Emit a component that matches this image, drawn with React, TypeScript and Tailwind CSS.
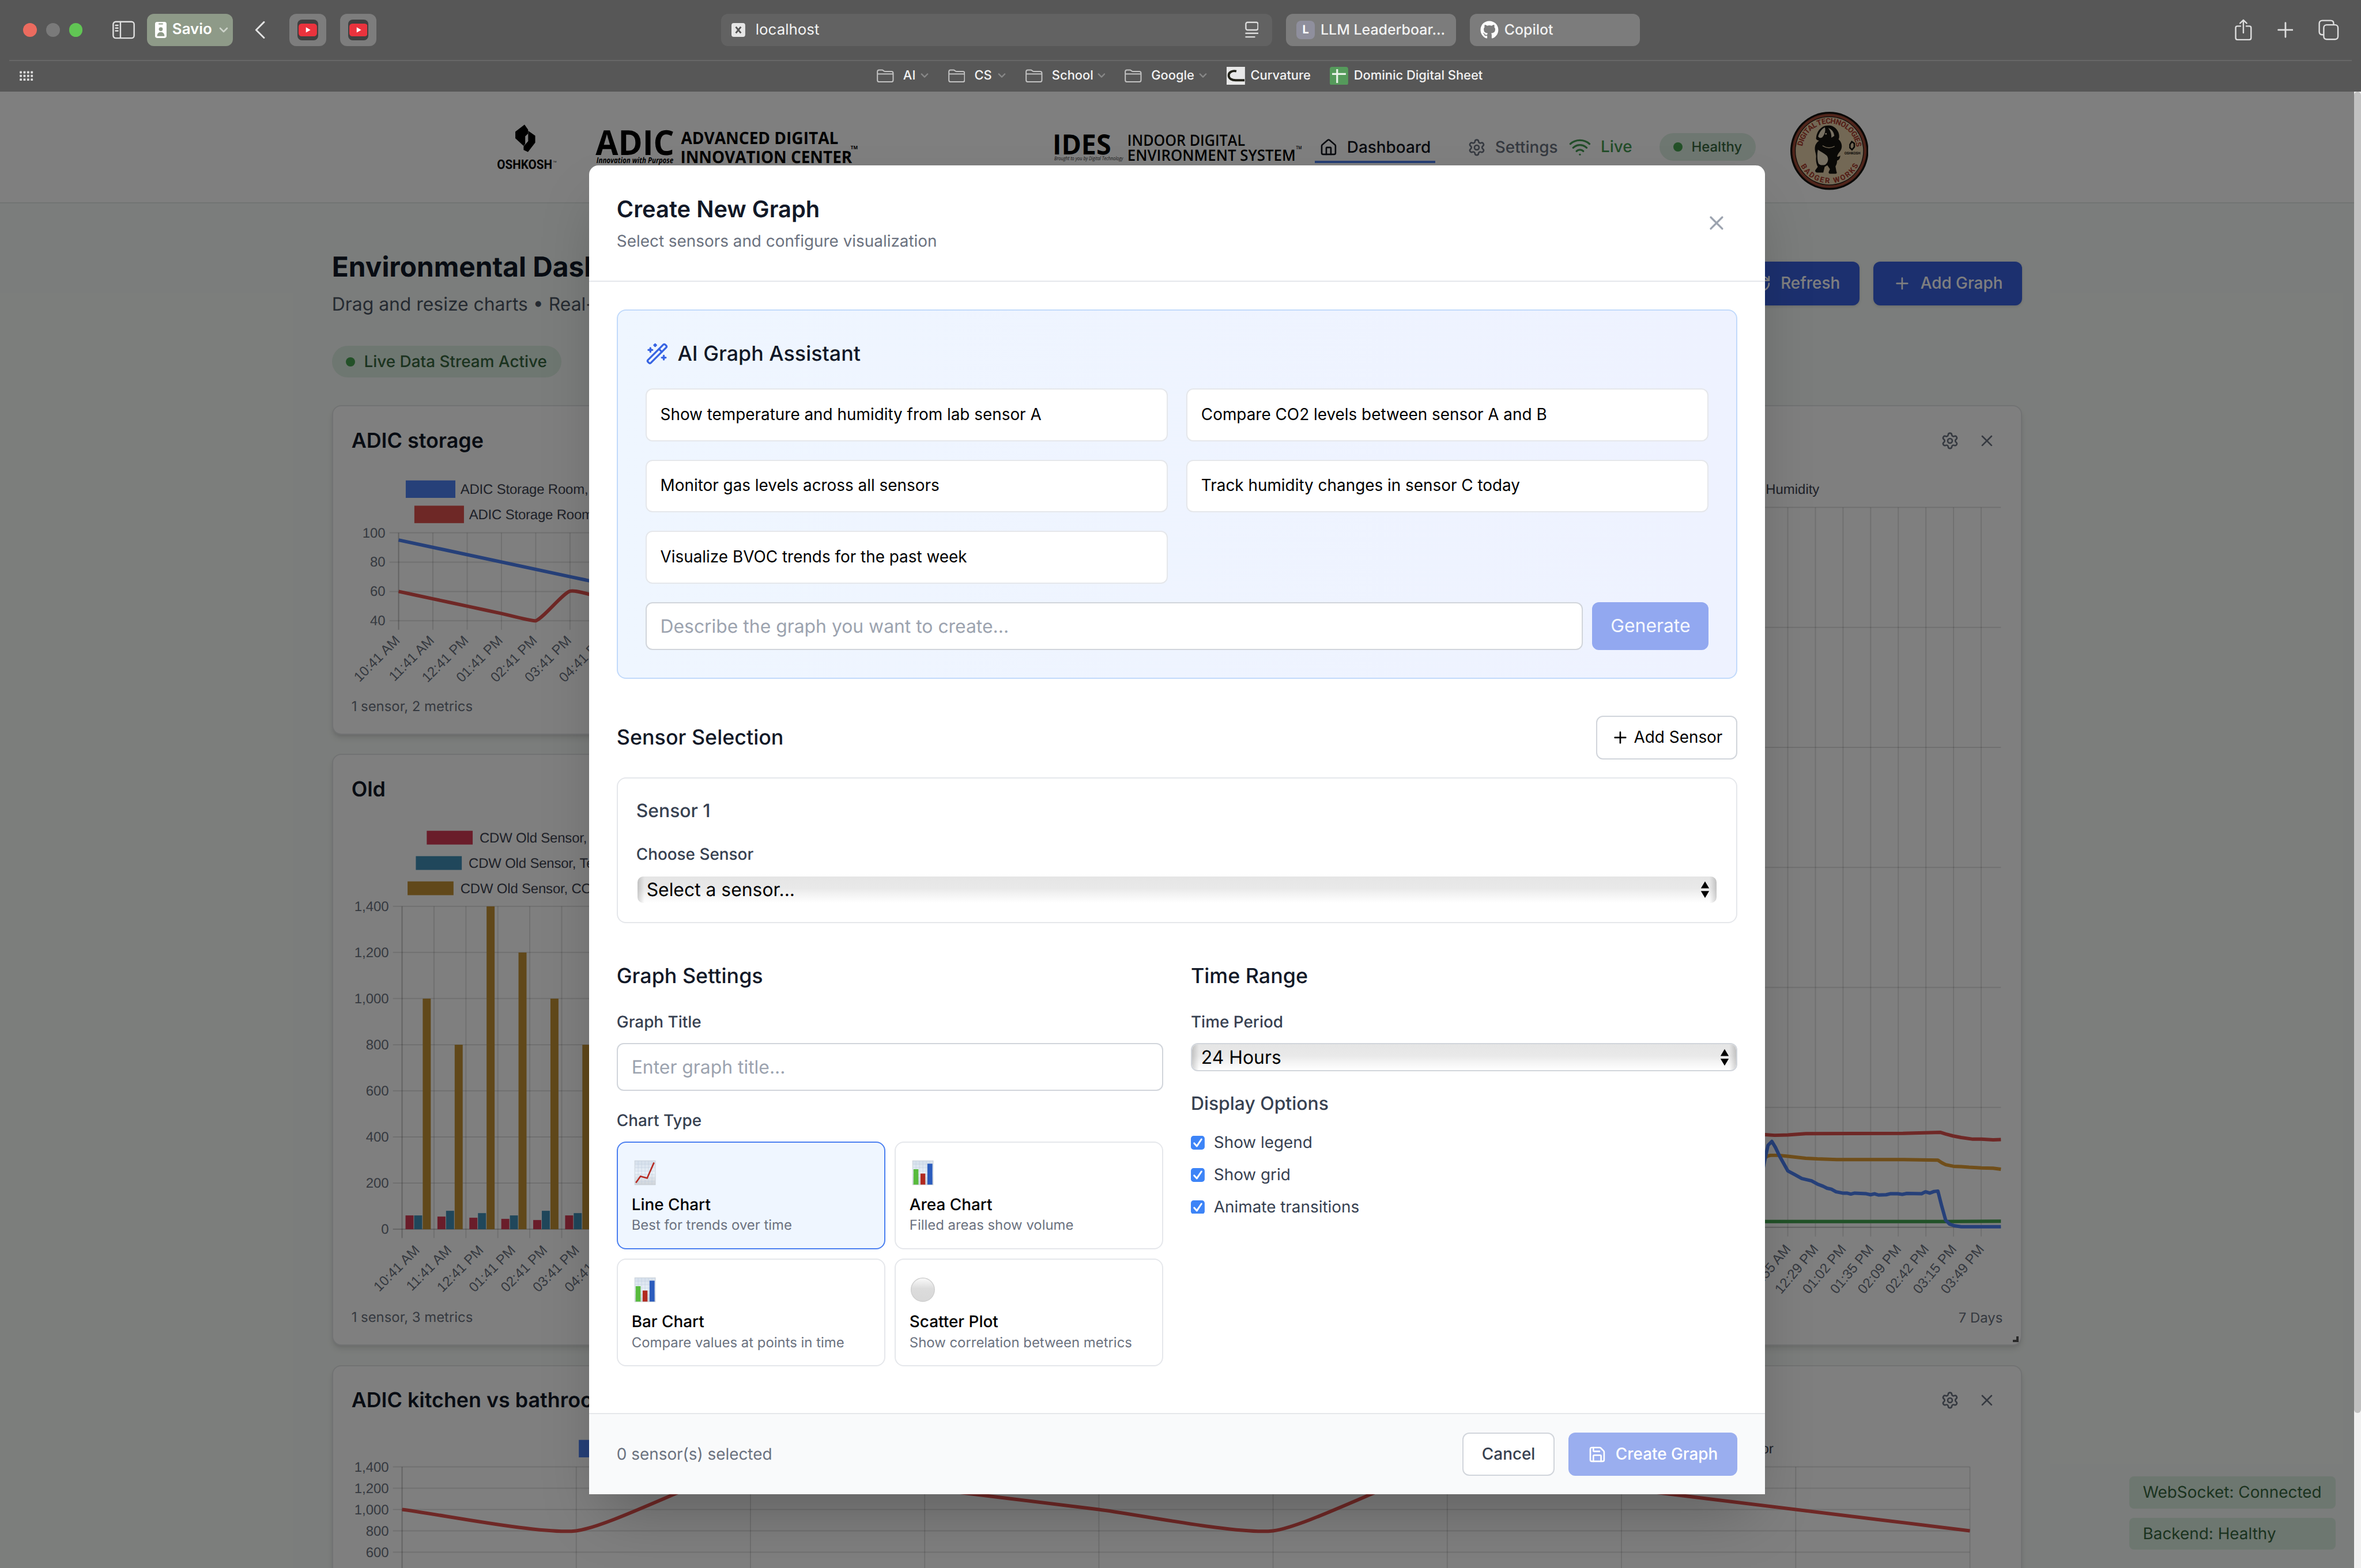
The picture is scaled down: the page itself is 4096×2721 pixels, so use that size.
import type { ReactNode } from "react";
import { House, Plus, RefreshCw, Save, Settings, WandSparkles, Wifi, X } from "lucide-react";
import { FaGithub } from "react-icons/fa";

/* ---------- browser chrome ---------- */

function SmallChevron({ className }: { className: string }) {
  return (
    <svg viewBox="0 0 8 5" className={className} fill="none" stroke="currentColor" strokeWidth="1.3" strokeLinecap="round" strokeLinejoin="round">
      <path d="M1 1l3 3 3-3" />
    </svg>
  );
}

function YouTubeTab() {
  return (
    <div className="flex h-7 w-8 items-center justify-center rounded-md bg-[#7d7d7d]">
      <div className="flex size-[18px] items-center justify-center rounded-[4px] bg-[#404040]">
        <svg viewBox="0 0 16 11" className="h-[11px] w-4">
          <rect width="16" height="11" rx="2.6" fill="#ea333d" />
          <path d="M6.4 3.2v4.6l4-2.3z" fill="#fff" />
        </svg>
      </div>
    </div>
  );
}

function Folder() {
  return (
    <svg viewBox="0 0 15 12" className="h-3 w-[15px] shrink-0" fill="none" stroke="#c3c3c3" strokeWidth="1">
      <path d="M.6 2.3C.6 1.3 1.2.8 2 .8h2.6c.5 0 .8.1 1.1.4l.6.5c.3.2.5.3.9.3h5.6c.9 0 1.5.5 1.5 1.5v6.1c0 1-.6 1.5-1.5 1.5H2C1.100 11.100.6 10.600.6 9.600z" />
      <path d="M.8 4.200h13.400" />
    </svg>
  );
}

function FolderBookmark({ label, width }: { label: string; width: string }) {
  return (
    <div className={`flex items-center ${width}`}>
      <Folder />
      <span className="ml-2">{label}</span>
      <SmallChevron className="mr-[17px] ml-auto h-[5px] w-[7px] text-[#888888]" />
    </div>
  );
}

function BrowserChrome() {
  return (
    <div className="h-20 bg-[#575757] text-[#f2f2f2]">
      <div className="flex h-[52px] items-center">
        <div className="ml-5 flex w-[78px] gap-2">
          <div className="size-3 rounded-full bg-[#ec6b5f]" />
          <div className="size-3 rounded-full bg-[#7a7a7a]" />
          <div className="size-3 rounded-full bg-[#61c554]" />
        </div>
        <svg viewBox="0 0 20 16" className="h-4 w-5" fill="none" stroke="#e0e0e0" strokeWidth="1.2" strokeLinecap="round">
          <rect x=".7" y=".9" width="18.200" height="14.200" rx="2.200" />
          <path d="M7 1v14M2.800 4h2M2.800 6.400h2M2.800 8.800h2" />
        </svg>
        <div className="ml-2.5 flex h-7 w-[75px] items-center rounded-md bg-[#8e9a88] pl-[7px]">
          <svg viewBox="0 0 10 14" className="h-3.5 w-2.5">
            <rect width="10" height="14" rx="1.800" fill="#fff" />
            <rect x="3" y="1.300" width="4" height="1" rx=".5" fill="#8e9a88" />
            <circle cx="5" cy="6.300" r="1.700" fill="#8e9a88" />
            <path d="M1.800 12.400c0-2.300 1.300-3.500 3.200-3.500s3.200 1.200 3.200 3.500z" fill="#8e9a88" />
          </svg>
          <span className="ml-[5px] w-[41px] text-[13px] font-semibold text-white">Savio</span>
          <SmallChevron className="h-[5px] w-2 text-[#cdd3ca]" />
        </div>
        <svg viewBox="0 0 9 16" className="ml-[19px] h-4 w-[9px]" fill="none" stroke="#e3e3e3" strokeWidth="1.500" strokeLinecap="round" strokeLinejoin="round">
          <path d="M8 1.200L1.200 8 8 14.800" />
        </svg>
        <div className="ml-[21px] flex gap-3">
          <YouTubeTab />
          <YouTubeTab />
        </div>
        <div className="ml-[300px] flex h-7 w-[480px] items-center rounded-md bg-[#626262] pr-3 pl-[9px]">
          <svg viewBox="0 0 12 12" className="size-3">
            <rect width="12" height="12" rx="2" fill="#e6e6e6" />
            <path d="M3.800 3.300l4.400 5.400M8.200 3.300L3.800 8.700" stroke="#565656" strokeWidth="1.500" />
          </svg>
          <span className="mt-px ml-[9px] text-[13px]">localhost</span>
          <svg viewBox="0 0 12 15" className="ml-auto h-[15px] w-3" fill="none" stroke="#dcdcdc" strokeWidth="1.200" strokeLinecap="round">
            <rect x=".7" y=".9" width="10.600" height="6.600" rx="1.500" />
            <path d="M.7 10.400h10.600M.7 13.600h7.600" />
          </svg>
        </div>
        <div className="ml-3 flex h-7 w-[148px] items-center rounded-md bg-[#7c7c7c] pl-[9px]">
          <div className="flex size-4 items-center justify-center rounded-[4px] bg-[#8f8f9d] text-[10px] font-bold text-white">L</div>
          <span className="mt-px ml-[5px] text-[12.500px] font-medium whitespace-nowrap">LLM Leaderboar...</span>
        </div>
        <div className="ml-3 flex h-7 w-[148px] items-center rounded-md bg-[#7c7c7c] pl-[9px]">
          <FaGithub className="size-4 text-white" />
          <span className="mt-px ml-[5px] text-[12.500px] font-medium">Copilot</span>
        </div>
        <svg viewBox="0 0 15 19" className="ml-[518px] h-[19px] w-[15px]" fill="none" stroke="#dedede" strokeWidth="1.200" strokeLinecap="round" strokeLinejoin="round">
          <path d="M5 6.200H2.300c-1 0-1.500.5-1.500 1.500v8.800c0 1 .5 1.500 1.500 1.500h10.400c1 0 1.500-.5 1.500-1.500V7.700c0-1-.5-1.500-1.500-1.500H10M7.500 12V1M4.600 3.700L7.500.9l2.900 2.800" />
        </svg>
        <svg viewBox="0 0 14 14" className="ml-[22px] size-3.5" stroke="#dedede" strokeWidth="1.400" strokeLinecap="round">
          <path d="M7 .8v12.400M.8 7h12.400" />
        </svg>
        <svg viewBox="0 0 18 18" className="ml-[22px] size-[18px]" fill="none" stroke="#dedede" strokeWidth="1.200">
          <rect x="4.700" y="4.600" width="12.400" height="12.600" rx="2.500" />
          <path d="M4.500 13.200h-1c-1.600 0-2.700-.9-2.700-2.500V3.400C.8 1.800 1.900.8 3.500.8h7.200c1.600 0 2.600 1 2.600 2.600v1" />
        </svg>
      </div>
      <div className="mx-2 h-px bg-[#676767]" />
      <div className="flex h-[26px] items-center text-[11px] font-medium">
        <svg viewBox="0 0 12 9" className="ml-[17px] h-[9px] w-3" fill="#dcdcdc">
          {[0, 1, 2].map((row) =>
            [0, 1, 2, 3].map((col) => <rect key={`${row}-${col}`} x={col * 3.200 + 0.1} y={row * 3.200 + 0.200} width="1.900" height="2" rx=".4" />),
          )}
        </svg>
        <div className="ml-[734.500px] flex items-center">
          <FolderBookmark label="AI" width="w-[62px]" />
          <FolderBookmark label="CS" width="w-[67.500px]" />
          <FolderBookmark label="School" width="w-[86.500px]" />
          <FolderBookmark label="Google" width="w-[88.500px]" />
          <div className="flex w-[90px] items-center">
            <svg viewBox="0 0 16 16" className="size-4 shrink-0">
              <rect width="16" height="16" fill="#e8e8e8" />
              <path d="M8.500 3.800C5 3 1.800 4.600 1.800 7.400c0 3 3 4.300 6 4.300h7.800" fill="none" stroke="#23231a" strokeWidth="2" />
            </svg>
            <span className="ml-[5px]">Curvature</span>
          </div>
          <div className="flex items-center">
            <svg viewBox="0 0 16 16" className="size-4 shrink-0">
              <rect width="16" height="16" rx="2" fill="#559a5b" />
              <path d="M2 6.200h12M6.400 2v12" stroke="#e8f1e8" strokeWidth="1.600" />
            </svg>
            <span className="ml-[5px] whitespace-nowrap">Dominic Digital Sheet</span>
          </div>
        </div>
      </div>
    </div>
  );
}

/* ---------- site header ---------- */

function OshkoshLogo() {
  return (
    <svg viewBox="430 105 56 48" className="mt-0.5 ml-[430px] h-12 w-14">
      <path d="M456.600 108.700L459.700 113V121.800L455.800 127.200L448.600 120.600V114.800Z" />
      <path d="M459.800 114v9l-4 4.500v3.200l3.800 1.800 6.300-8.200v-6z" />
      <path d="M457.200 118.800l2.400-2.200v6.400l-2.400 2.800z" fill="#fff" />
      <text x="432.700" y="147.300" fontSize="11.300" fontWeight="700" textLength="48" lengthAdjust="spacingAndGlyphs" fontFamily="Roboto, sans-serif">OSHKOSH</text>
      <text x="481.500" y="141.500" fontSize="2" fontFamily="Roboto, sans-serif">TM</text>
    </svg>
  );
}

function AdicLogo() {
  return (
    <svg viewBox="516 105 236 48" className="mt-0.5 ml-[30px] h-12 w-[236px] overflow-visible" fontFamily="'Open Sans', sans-serif" fontWeight="700">
      <text x="518.700" y="135.200" fontSize="30" textLength="68.500" lengthAdjust="spacingAndGlyphs">ADIC</text>
      <text x="519.400" y="142.400" fontSize="7" fontStyle="italic" textLength="67" lengthAdjust="spacingAndGlyphs">Innovation with Purpose</text>
      <text x="593" y="125.500" fontSize="14.800" textLength="137" lengthAdjust="spacingAndGlyphs">ADVANCED DIGITAL</text>
      <text x="592.500" y="142" fontSize="14.800" textLength="149.500" lengthAdjust="spacingAndGlyphs">INNOVATION CENTER</text>
      <text x="740.800" y="130" fontSize="4.200" textLength="6.200" lengthAdjust="spacingAndGlyphs">TM</text>
    </svg>
  );
}

function IdesLogo() {
  return (
    <svg viewBox="915 105 222 48" className="mt-0.5 ml-[163px] h-12 w-[222px] overflow-visible" fontFamily="'Open Sans', sans-serif" fontWeight="600">
      <text x="916.500" y="134.500" fontSize="24.200" fontWeight="700" textLength="51" lengthAdjust="spacingAndGlyphs">IDES</text>
      <text x="918" y="139.600" fontSize="4.600" fontStyle="italic" fontWeight="400" fill="#333" textLength="60" lengthAdjust="spacingAndGlyphs">Brought to you by Digital Technology</text>
      <text x="981.700" y="127.300" fontSize="13.500" textLength="102.500" lengthAdjust="spacingAndGlyphs">INDOOR DIGITAL</text>
      <text x="981.700" y="140.300" fontSize="13.500" textLength="146.500" lengthAdjust="spacingAndGlyphs">ENVIRONMENT SYSTEM</text>
      <text x="1128.600" y="130" fontSize="4" textLength="5" lengthAdjust="spacingAndGlyphs">TM</text>
    </svg>
  );
}

function BadgerBadge() {
  return (
    <svg viewBox="0 0 68 68" className="mt-[7px] ml-[30px] size-[68px]">
      <defs>
        <path id="badge-top" d="M10.200 34a23.800 23.800 0 0 1 47.600 0" />
        <path id="badge-bottom" d="M5.800 34a28.200 28.200 0 0 0 56.400 0" />
      </defs>
      <circle cx="34" cy="34" r="34" fill="#14120f" />
      <circle cx="34" cy="34" r="32.300" fill="#a04a36" />
      <circle cx="34" cy="34" r="30" fill="#14120f" />
      <circle cx="34" cy="34" r="29.400" fill="#e6d0aa" />
      <g fontFamily="Roboto, sans-serif" fontWeight="800" fontSize="6.600" fill="#a83e30">
        <text>
          <textPath href="#badge-top" startOffset="4" textLength="67" lengthAdjust="spacing">DIGITAL TECHNOLOGIES</textPath>
        </text>
        <text>
          <textPath href="#badge-bottom" startOffset="13.500" textLength="62" lengthAdjust="spacing">BADGER WORKS</textPath>
        </text>
      </g>
      {/* body, legs and tail */}
      <path d="M27 24c-4 2-6 5-5.600 9 .2 2.500 1.200 4 1 6.500-.3 3 .2 6 1.500 8.500l-2.200 3c-.3 1.300.6 2 1.800 2h5.200l1.200-5 2.300-1.500 2.300 3.500-1.200 2.600c0 1 .7 1.400 1.600 1.400h4.600c1 0 1.200-1.200.6-2l-.8-4.500c1-1.500 1.400-3.300 1.400-5 1.600-.3 2.700-2 2.800-4.500-1 .9-1.800 1.200-2.700 1 .4-3.500 4-4.500 4-9 0-3.500-2.300-6.500-5.800-7.500z" fill="#14120f" />
      {/* head with its stripes */}
      <path d="M22.500 22.500c.3-3.500 2-7 5-9 2.200-1.500 6.500-2.200 9.500-.8 3.500 1.600 6 5.800 5.500 9.600-.4 2.600-3 4.700-6 4.700-3.500 0-5-2-7.500-1.800-2.500.2-4.300.3-5.800-.7-.8-.6-1-1.300-.7-2z" fill="#14120f" />
      <path d="M24.200 21.500c1-3.500 3-6.600 5.800-8 .9 2.300.2 5.500-2 8.500-1 1-2.700 1.200-3.800-.5zM33 14c2.800 1 5 3.500 5.300 7l-2.600 1.600c.3-3-.7-6-2.700-8.600z" fill="#efe0c4" />
      <circle cx="31" cy="19.200" r=".7" fill="#efe0c4" />
      <path d="M24 33c3.500 2.500 6 3.500 8 5.500 1.500 2.500 1 5.500-1.500 7.500-2.500.8-4.800.5-6-1-1.200-3.500-1.200-8-.5-12z" fill="#efe0c4" />
      <path d="M28 29.500c3 2 7 2.500 10.500.5M41 39c1.500-1 3-2.500 3.500-4.500" fill="none" stroke="#e6d0aa" strokeWidth=".7" />
      <path d="M53.500 26l2.200 1.600v3l-2 2.400-1.800-1.700v-2.800z" fill="none" stroke="#14120f" strokeWidth="1.300" />
      <text x="47" y="37" fontSize="3.200" fontWeight="700" fontFamily="Roboto, sans-serif" textLength="14" lengthAdjust="spacingAndGlyphs" fill="#14120f">OSHKOSH</text>
    </svg>
  );
}

function SiteHeader() {
  return (
    <header className="flex h-[97px] items-center border-b-[1.02px] border-[#e3e8e6] bg-white">
      <OshkoshLogo />
      <AdicLogo />
      <IdesLogo />
      <nav className="ml-2 flex gap-6 text-sm font-medium">
        <div className="mt-[3px] flex h-[25px] w-[105px] items-center gap-2 border-b-[2.02px] border-[#4c7ce8] px-1 text-[#12161f]">
          <House className="size-4 shrink-0" />
          Dashboard
        </div>
        <div className="mt-[3px] flex h-[25px] w-[87px] items-center gap-2 border-b-[2.02px] border-transparent px-1 text-[#6b7280]">
          <Settings className="size-4 shrink-0" />
          Settings
        </div>
      </nav>
      <div className="ml-[5px] flex w-[79px] items-center gap-2 text-sm font-medium text-[#459a52]">
        <Wifi className="size-5" />
        Live
      </div>
      <div className="flex h-6 w-21 items-center gap-2 rounded-full bg-[#ddeee2] pl-3 text-xs font-medium text-[#36663f]">
        <span className="size-2 rounded-full bg-[#46a350]" />
        Healthy
      </div>
      <BadgerBadge />
    </header>
  );
}

/* ---------- charts ---------- */

type Point = [number, number];

/** Smooth curve through the points, control points kept inside [top, bottom]. */
function spline(points: Point[], tension: number, top: number, bottom: number): string {
  const clamp = (y: number) => Math.min(bottom, Math.max(top, y));
  const controls = points.map((p, i) => {
    const prev = points[i - 1] ?? p;
    const next = points[i + 1] ?? p;
    const d01 = Math.hypot(p[0] - prev[0], p[1] - prev[1]);
    const d12 = Math.hypot(next[0] - p[0], next[1] - p[1]);
    const sum = d01 + d12 || 1;
    const fa = (tension * d01) / sum;
    const fb = (tension * d12) / sum;
    return {
      before: [p[0] - fa * (next[0] - prev[0]), clamp(p[1] - fa * (next[1] - prev[1]))],
      after: [p[0] + fb * (next[0] - prev[0]), clamp(p[1] + fb * (next[1] - prev[1]))],
    };
  });
  return points
    .map((p, i) => (i === 0 ? `M${p[0]} ${p[1]}` : `C${controls[i - 1].after.join(" ")} ${controls[i].before.join(" ")} ${p[0]} ${p[1]}`))
    .join("");
}

const polyline = (points: Point[]) => points.map((p) => p.join(",")).join(" ");

const CHART_FONT = "'Liberation Sans', Arial, sans-serif";
const GRID = "rgba(0,0,0,.12)";
const HOURS = ["10:41 AM", "11:41 AM", "12:41 PM", "01:41 PM", "02:41 PM", "03:41 PM", "04:41 PM"];

function SlantedLabel({ x, y, angle, children }: { x: number; y: number; angle: number; children: string }) {
  return (
    <text transform={`translate(${x} ${y}) rotate(${-angle})`} textAnchor="end" fill="#6b7280">
      {children}
    </text>
  );
}

function Legend({ x, y, color, outlined, children }: { x: number; y: number; color: string; outlined?: boolean; children?: string }) {
  const pad = outlined ? 1.600 : 0;
  return (
    <>
      <rect x={x - pad} y={y - 6 - pad} width={40 + pad * 2} height={12 + pad * 2} fill={color} />
      <text x={x + 46} y={y + 4.200} fill="#3c4250" letterSpacing="-.08">
        {children}
      </text>
    </>
  );
}

function StorageChart() {
  const step = 29.85;
  const blue: Point[] = [[347, 470.3], [496, 502.2], [526, 508.500], [720, 540]];
  const red: Point[] = [[347, 515.1], [376.800, 521.500], [406.700, 527.900], [436.500, 534.300], [466.300, 540.700], [496.200, 514.900], [526, 521.300], [556, 527.700]];
  return (
    <svg viewBox="290 404 726 196" className="h-[196px] w-full" fontFamily={CHART_FONT} fontSize="12" preserveAspectRatio="xMinYMin slice">
      <Legend x={354.800} y={426} color="#4d80f2" outlined>ADIC Storage Room, Humidity</Legend>
      <Legend x={362.300} y={448} color="#dc504c" outlined>ADIC Storage Room, Temperature</Legend>
      {[100, 80, 60, 40].map((v, i) => (
        <g key={v}>
          <path d={`M339 ${464 + i * 25.570}H1000`} stroke={GRID} />
          <text x="335.500" y={468 + i * 25.570} textAnchor="end" fill="#6b7280">{v}</text>
        </g>
      ))}
      {HOURS.map((h, i) => (
        <g key={h}>
          <path d={`M${347 + i * step} 464V548.500`} stroke={i === 0 ? "rgba(0,0,0,.22)" : GRID} />
          <SlantedLabel x={348.800 + i * step} y={558.600} angle={45}>{h}</SlantedLabel>
        </g>
      ))}
      <path d={spline(red, 0.200, 464, 540.700)} fill="none" stroke="#de504c" strokeWidth="3" />
      <polyline points={polyline(blue)} fill="none" stroke="#4d80f2" strokeWidth="3" />
    </svg>
  );
}

function OldChart() {
  const step = 27.800;
  const rows = [1400, 1200, 1000, 800, 600, 400, 200, 0];
  const data = [
    [60, 60, 1000],
    [55, 80, 800],
    [50, 70, 1400],
    [45, 60, 1200],
    [40, 80, 1000],
    [60, 70, 800],
  ];
  const colors = ["#d43a54", "#418fb6", "#c29134"];
  return (
    <svg viewBox="290 708 726 424" className="h-[424px] w-full" fontFamily={CHART_FONT} fontSize="12" preserveAspectRatio="xMinYMin slice">
      <Legend x={371.500} y={729.900} color={colors[0]}>CDW Old Sensor, Humidity</Legend>
      <Legend x={362} y={752} color={colors[1]}>CDW Old Sensor, Temperature</Legend>
      <Legend x={354.800} y={774} color={colors[2]}>CDW Old Sensor, CO2 Level</Legend>
      {rows.map((v, i) => (
        <g key={v}>
          <path d={`M342 ${789.700 + i * 40.180}H1000`} stroke={v === 0 ? "rgba(0,0,0,.2)" : GRID} />
          <text x="338.500" y={793.800 + i * 40.180} textAnchor="end" fill="#6b7280">{v.toLocaleString("en-US")}</text>
        </g>
      ))}
      {HOURS.map((h, i) => (
        <g key={h}>
          <path d={`M${350 + i * step} 789.700V1078.700`} stroke={i === 0 ? "rgba(0,0,0,.22)" : GRID} />
          <SlantedLabel x={366 + i * step} y={1090} angle={45}>{h}</SlantedLabel>
        </g>
      ))}
      {data.map((group, g) =>
        group.map((v, b) => (
          <rect key={`${g}-${b}`} x={353 + g * step + b * 7.500} y={1071 - v * 0.2009} width="7" height={v * 0.2009} fill={colors[b]} />
        )),
      )}
    </svg>
  );
}

const TICKS = ["11:55 AM", "12:29 PM", "01:02 PM", "01:35 PM", "02:09 PM", "02:42 PM", "03:15 PM", "03:49 PM"];

/** Places a sampled series on the chart's plot area. */
const plot = (samples: Point[]): string => polyline(samples.map(([x, y]) => [x * 0.33864 + 1525, y * 0.28125 + 925]));

const SERIES: { color: string; samples: Point[] }[] = [
  { color: "#44a551", samples: [[-20, 494], [35, 494], [500, 494], [642, 493]] },
  { color: "#e09d34", samples: [[-20, 360], [35, 297], [42, 291], [50, 289], [70, 289], [94, 292], [140, 298], [170, 300], [220, 302], [390, 302], [480, 304], [490, 312], [500, 318], [520, 323], [540, 324], [560, 326], [592, 328], [622, 329], [642, 332]] },
  { color: "#de504c", samples: [[-20, 223], [35, 225], [60, 227], [94, 226], [140, 222], [390, 221], [487, 218], [500, 223], [519, 229], [540, 234], [570, 239], [592, 239], [622, 241], [642, 240]] },
  { color: "#4d80f2", samples: [[28, 345], [35, 303], [43, 258], [53, 246], [62, 264], [73, 292], [94, 337], [112, 349], [130, 361], [155, 368], [170, 378], [185, 385], [195, 391], [206, 394], [218, 402], [235, 406], [246, 406], [256, 409], [266, 406], [296, 408], [307, 411], [317, 408], [327, 412], [347, 411], [357, 408], [377, 408], [388, 410], [400, 407], [438, 408], [448, 402], [459, 406], [470, 401], [480, 400], [490, 447], [500, 490], [510, 502], [522, 507], [540, 510], [642, 510]] },
];

function WeekChart() {
  return (
    <svg viewBox="1034 404 726 728" className="h-[728px] w-full" fontFamily={CHART_FONT} fontSize="12" preserveAspectRatio="xMaxYMin slice">
      <text x="1584.300" y="430" textAnchor="end" fill="#3c4250">Humidity</text>
      {[0, 1, 2, 3, 4, 5, 6].map((i) => (
        <path key={i} d={`M1100 ${441.900 + i * 104.520}H1742.400`} stroke={i === 6 ? "rgba(0,0,0,.24)" : GRID} />
      ))}
      {TICKS.map((t, i) => (
        <g key={t}>
          <path d={`M${1556.800 + i * 24.060} 441.900V1077`} stroke={GRID} />
          <SlantedLabel x={1560 + i * 24.060} y={1088.300} angle={50}>{t}</SlantedLabel>
        </g>
      ))}
      {SERIES.map((s) => (
        <polyline key={s.color} points={plot(s.samples)} fill="none" stroke={s.color} strokeWidth="3" strokeLinejoin="round" />
      ))}
    </svg>
  );
}

function KitchenChart() {
  const values = [1000, 800, 1400, 1200, 1000, 800, 1400, 1200, 1000, 800];
  const points = values.map((v, i): Point => [350 + i * 151.700, 1277.900 + (1400 - v) * 0.0928]);
  return (
    <svg viewBox="290 1240 1470 126" className="h-[126px] w-full" fontFamily={CHART_FONT} fontSize="12">
      <Legend x={505.500} y={1262} color="#4d80f2" outlined />
      <text x="1544.300" y="1266" textAnchor="end" fill="#3c4250">Sensor</text>
      {[1400, 1200, 1000, 800, 600].map((v, i) => (
        <g key={v}>
          <path d={`M342 ${1277.900 + i * 18.560}H1715.300`} stroke={GRID} />
          <text x="338.500" y={1282 + i * 18.560} textAnchor="end" fill="#6b7280">{v.toLocaleString("en-US")}</text>
        </g>
      ))}
      {points.map(([x], i) => (
        <path key={x} d={`M${x} 1277.900V1366`} stroke={i === 0 ? "rgba(0,0,0,.22)" : GRID} />
      ))}
      <path d={spline(points, 0.200, 1277.900, 1400)} fill="none" stroke="#de504c" strokeWidth="3" />
    </svg>
  );
}

/* ---------- dashboard page ---------- */

function ChartCard({ title, className, actions, children }: { title: string; className: string; actions?: boolean; children: ReactNode }) {
  return (
    <section className={`overflow-hidden rounded-lg border-[1.02px] border-[#e2e5e6] bg-white shadow-md ${className}`}>
      <div className="flex h-[50px] items-end justify-between pr-[22px] pb-1.5 pl-4">
        <h3 className="text-lg leading-7 font-semibold text-[#111827]">{title}</h3>
        {actions && (
          <div className="flex h-7 items-center gap-4 text-[#6b7280]">
            <Settings className="size-4" />
            <X className="size-4" />
          </div>
        )}
      </div>
      {children}
    </section>
  );
}

function Dashboard() {
  return (
    <main className="mx-auto w-[1472px] pt-10">
      <div className="flex items-center justify-between">
        <div>
          <h1 className="text-2xl font-bold text-[#111827]">Environmental Dashboard</h1>
          <p className="mt-1 text-base text-[#4b5563]">Drag and resize charts • Real-time updates</p>
        </div>
        <div className="flex gap-3 text-sm font-medium text-white">
          <button className="flex h-[38px] items-center gap-2 rounded-md bg-[#3860df] px-[17px] shadow-sm">
            <RefreshCw className="size-4" />
            Refresh
          </button>
          <button className="flex h-[38px] items-center gap-2 rounded-md bg-[#3860df] px-[17px] shadow-sm">
            <Plus className="size-4" />
            Add Graph
          </button>
        </div>
      </div>
      <div className="mt-6 flex w-[200px] items-center gap-2 rounded-full bg-[#ddeee2] px-3 py-1 text-sm font-medium whitespace-nowrap text-[#36663f]">
        <span className="size-2 rounded-full bg-[#46a350]" />
        Live Data Stream Active
      </div>
      <div className="mt-6 grid grid-cols-2 grid-rows-[287px_515.500px_240px] gap-x-4 gap-y-[16.700px]">
        <ChartCard title="ADIC storage" className="">
          <StorageChart />
          <p className="mt-[7.600px] px-4 text-xs text-[#6b7280]">1 sensor, 2 metrics</p>
        </ChartCard>
        <ChartCard title="Lab overview" className="relative row-span-2" actions>
          <WeekChart />
          <p className="mt-[8px] px-4 text-right text-xs text-[#6b7280]">7 Days</p>
          <div className="absolute right-[2px] bottom-[2px] size-[5px] border-r-[2.02px] border-b-[2.02px] border-[#555]" />
        </ChartCard>
        <ChartCard title="Old" className="">
          <OldChart />
          <p className="mt-[7.600px] px-4 text-xs text-[#6b7280]">1 sensor, 3 metrics</p>
        </ChartCard>
        <ChartCard title="ADIC kitchen vs bathroom" className="col-span-2" actions>
          <KitchenChart />
        </ChartCard>
      </div>
    </main>
  );
}

/* ---------- dialog ---------- */

const SUGGESTIONS = [
  "Show temperature and humidity from lab sensor A",
  "Compare CO2 levels between sensor A and B",
  "Monitor gas levels across all sensors",
  "Track humidity changes in sensor C today",
  "Visualize BVOC trends for the past week",
];

function NativeSelect({ value, className }: { value: string; className: string }) {
  return (
    <div className={`flex h-[25px] items-center justify-between rounded-md border-[1.02px] bg-[linear-gradient(to_right,#0000002a,transparent_6px),linear-gradient(to_left,#0000002a,transparent_6px),linear-gradient(#e5e5e5,#e9e9e9_45%,#f4f4f4_70%,#ffffff)] bg-clip-padding pr-1.5 pl-2 text-base text-black ${className}`}>
      {value}
      <svg viewBox="0 0 8 15" className="h-[15px] w-2">
        <path d="M4 .3l3.600 6H.4zM4 14.700l3.600-6H.4z" />
      </svg>
    </div>
  );
}

function PaperEmoji({ children }: { children: ReactNode }) {
  return (
    <svg viewBox="0 0 23 22" className="h-[22px] w-[23px]">
      <defs>
        <linearGradient id="paper" x1="0" y1="0" x2="0" y2="1">
          <stop offset="0" stopColor="#d5dfeb" />
          <stop offset=".5" stopColor="#eaf1f8" />
          <stop offset="1" stopColor="#cfd3d8" />
        </linearGradient>
      </defs>
      <rect x="2.600" y=".6" width="18" height="21" fill="url(#paper)" stroke="#c5cbd3" strokeWidth=".4" />
      <path d="M5.600 1v20M8.600 1v20M11.600 1v20M14.600 1v20M17.600 1v20M3 3.600h17M3 6.600h17M3 9.600h17M3 12.600h17M3 15.600h17M3 18.600h17" stroke="#bccbdc" strokeWidth=".25" />
      {children}
    </svg>
  );
}

function LineEmoji() {
  return (
    <PaperEmoji>
      <path d="M3.600 19.800l4-5.600 5.800 1.600 6-13.600" fill="none" stroke="#b72a22" strokeWidth="1.300" />
    </PaperEmoji>
  );
}

function BarsEmoji() {
  return (
    <PaperEmoji>
      <rect x="3.400" y="8" width="4.300" height="13.400" fill="#58bb3d" />
      <rect x="9.500" y="11.800" width="4.200" height="9.600" fill="#b12a20" />
      <rect x="15.500" y="3.200" width="4.400" height="18.200" fill="#2b5cbd" />
    </PaperEmoji>
  );
}

function CircleEmoji() {
  return (
    <svg viewBox="0 0 23 22" className="h-[22px] w-[23px]">
      <defs>
        <linearGradient id="pearl" x1="0" y1="0" x2="0" y2="1">
          <stop offset="0" stopColor="#fafafa" />
          <stop offset=".45" stopColor="#dcdcdc" />
          <stop offset="1" stopColor="#d8d8d8" />
        </linearGradient>
      </defs>
      <circle cx="11.500" cy="11.100" r="10.200" fill="url(#pearl)" stroke="#cfcfcf" strokeWidth=".7" />
    </svg>
  );
}

const CHART_TYPES = [
  { name: "Line Chart", detail: "Best for trends over time", icon: <LineEmoji />, tone: "border-[#4b7ff0] bg-[#eff6ff]" },
  { name: "Area Chart", detail: "Filled areas show volume", icon: <BarsEmoji />, tone: "border-[#e5e7eb]" },
  { name: "Bar Chart", detail: "Compare values at points in time", icon: <BarsEmoji />, tone: "border-[#e5e7eb]" },
  { name: "Scatter Plot", detail: "Show correlation between metrics", icon: <CircleEmoji />, tone: "border-[#e5e7eb]" },
];

function Checkbox({ label }: { label: string }) {
  return (
    <label className="flex items-center gap-2 text-sm text-[#374151]">
      <svg viewBox="0 0 12 12" className="size-3">
        <rect width="12" height="12" rx="2.400" fill="#3d84f7" />
        <path d="M2.900 6.500l2.300 2.500 4-6" fill="none" stroke="#fff" strokeWidth="1.500" strokeLinecap="round" strokeLinejoin="round" />
      </svg>
      {label}
    </label>
  );
}

function CreateGraphDialog() {
  return (
    <div className="flex h-[1157.400px] w-[1024px] flex-col rounded-t-lg bg-white shadow-2xl">
      <div className="flex items-center justify-between border-b-[1.02px] border-[#e5e7eb] p-6">
        <div>
          <h2 className="text-xl leading-7 font-semibold text-[#111827]">Create New Graph</h2>
          <p className="mt-1 text-sm text-[#6b7280]">Select sensors and configure visualization</p>
        </div>
        <button className="p-2 text-[#9ca3af]">
          <X className="size-5" />
        </button>
      </div>

      <div className="flex-1 p-6">
        <div className="rounded-lg border-[1.02px] border-[#c2dafb] bg-linear-to-r from-[#eff6ff] to-[#eef2ff] p-6">
          <div className="flex h-7 items-center gap-2">
            <WandSparkles className="size-5 text-[#3965e3]" />
            <h3 className="text-lg font-medium text-[#111827]">AI Graph Assistant</h3>
          </div>
          <div className="mt-4 grid grid-cols-2 gap-4">
            {SUGGESTIONS.map((s) => (
              <button key={s} className="rounded-md border-[1.02px] border-[#e5e7eb] bg-white p-3 text-left text-sm text-black">
                {s}
              </button>
            ))}
          </div>
          <div className="mt-4 flex gap-2">
            <div className="h-[42px] flex-1 rounded-md border-[1.02px] border-[#d1d5db] bg-white px-3 py-2 text-base text-[#9ca3af]">Describe the graph you want to create...</div>
            <button className="h-[42px] rounded-md bg-[#92a8f0] px-4 text-base text-[#f6f8fe]">Generate</button>
          </div>
        </div>

        <div className="mt-8 flex items-center justify-between">
          <h3 className="text-lg font-medium text-[#111827]">Sensor Selection</h3>
          <button className="flex h-[38px] items-center gap-1 rounded-md border-[1.02px] border-[#d1d5db] px-3 text-sm text-black">
            <Plus className="size-4" />
            Add Sensor
          </button>
        </div>
        <div className="mt-4 rounded-lg border-[1.02px] border-[#e5e7eb] p-4">
          <h4 className="text-base font-medium text-[#374151]">Sensor 1</h4>
          <p className="mt-4 mb-2 text-sm font-medium text-[#374151]">Choose Sensor</p>
          <NativeSelect value="Select a sensor..." className="border-transparent" />
        </div>

        <div className="mt-8 grid grid-cols-2 gap-6">
          <div>
            <h3 className="text-lg leading-7 font-medium text-[#111827]">Graph Settings</h3>
            <p className="mt-4 mb-2 text-sm font-medium text-[#374151]">Graph Title</p>
            <div className="h-[42px] rounded-md border-[1.02px] border-[#d1d5db] px-3 py-2 text-base text-[#9ca3af]">Enter graph title...</div>
            <p className="mt-4 mb-2 text-sm font-medium text-[#374151]">Chart Type</p>
            <div className="grid grid-cols-2 gap-2">
              {CHART_TYPES.map((t) => (
                <div key={t.name} className={`h-[94px] rounded-lg border-[1.02px] p-3 ${t.tone}`}>
                  <div className="mb-1 flex h-7 items-center">{t.icon}</div>
                  <div className="text-sm font-medium text-black">{t.name}</div>
                  <div className="text-xs text-[#6b7280]">{t.detail}</div>
                </div>
              ))}
            </div>
          </div>
          <div>
            <h3 className="text-lg leading-7 font-medium text-[#111827]">Time Range</h3>
            <p className="mt-4 mb-2 text-sm font-medium text-[#374151]">Time Period</p>
            <NativeSelect value="24 Hours" className="border-[#d1d5db]" />
            <h4 className="mt-4 text-base font-medium text-[#374151]">Display Options</h4>
            <div className="mt-3 flex flex-col gap-2">
              <Checkbox label="Show legend" />
              <Checkbox label="Show grid" />
              <Checkbox label="Animate transitions" />
            </div>
          </div>
        </div>
      </div>

      <div className="flex items-center justify-between border-t-[1.02px] border-[#e5e7eb] bg-[#f9fafb] px-6 py-4 text-sm">
        <span className="text-[#6b7280]">0 sensor(s) selected</span>
        <div className="flex gap-3 font-medium">
          <button className="h-[38px] rounded-md border-[1.02px] border-[#d1d5db] bg-white px-4 text-[#374151]">Cancel</button>
          <button className="flex h-[38px] items-center gap-2 rounded-md bg-[#9aaeef] px-[17px] text-white">
            <Save className="size-4" />
            Create Graph
          </button>
        </div>
      </div>
    </div>
  );
}

export default function App() {
  return (
    <div className="h-[2721px] w-[4096px] overflow-hidden bg-[#575757]">
      <div className="h-[1366px] w-[2056px] overflow-hidden font-['Inter',sans-serif] [text-rendering:geometricPrecision] [zoom:1.99222]">
        <BrowserChrome />
        <div className="flex h-[1286px]">
          <div className="relative h-full w-[2050px] overflow-hidden bg-[#f7fbf8]">
            <SiteHeader />
            <Dashboard />
            <div className="absolute right-4 bottom-4 flex w-[180px] flex-col gap-2 text-sm whitespace-nowrap text-[#36663f]">
              <div className="rounded bg-[#dbeee0] px-3 py-1">WebSocket: Connected</div>
              <div className="rounded bg-[#dbeee0] px-3 py-1">Backend: Healthy</div>
            </div>
            <div className="absolute inset-0 flex items-center justify-center bg-black/50">
              <CreateGraphDialog />
            </div>
          </div>
          <div className="w-1.5 bg-[#f1f1f1]">
            <div className="h-[1151px] rounded-full bg-[#c1c1c1]" />
          </div>
        </div>
      </div>
    </div>
  );
}
